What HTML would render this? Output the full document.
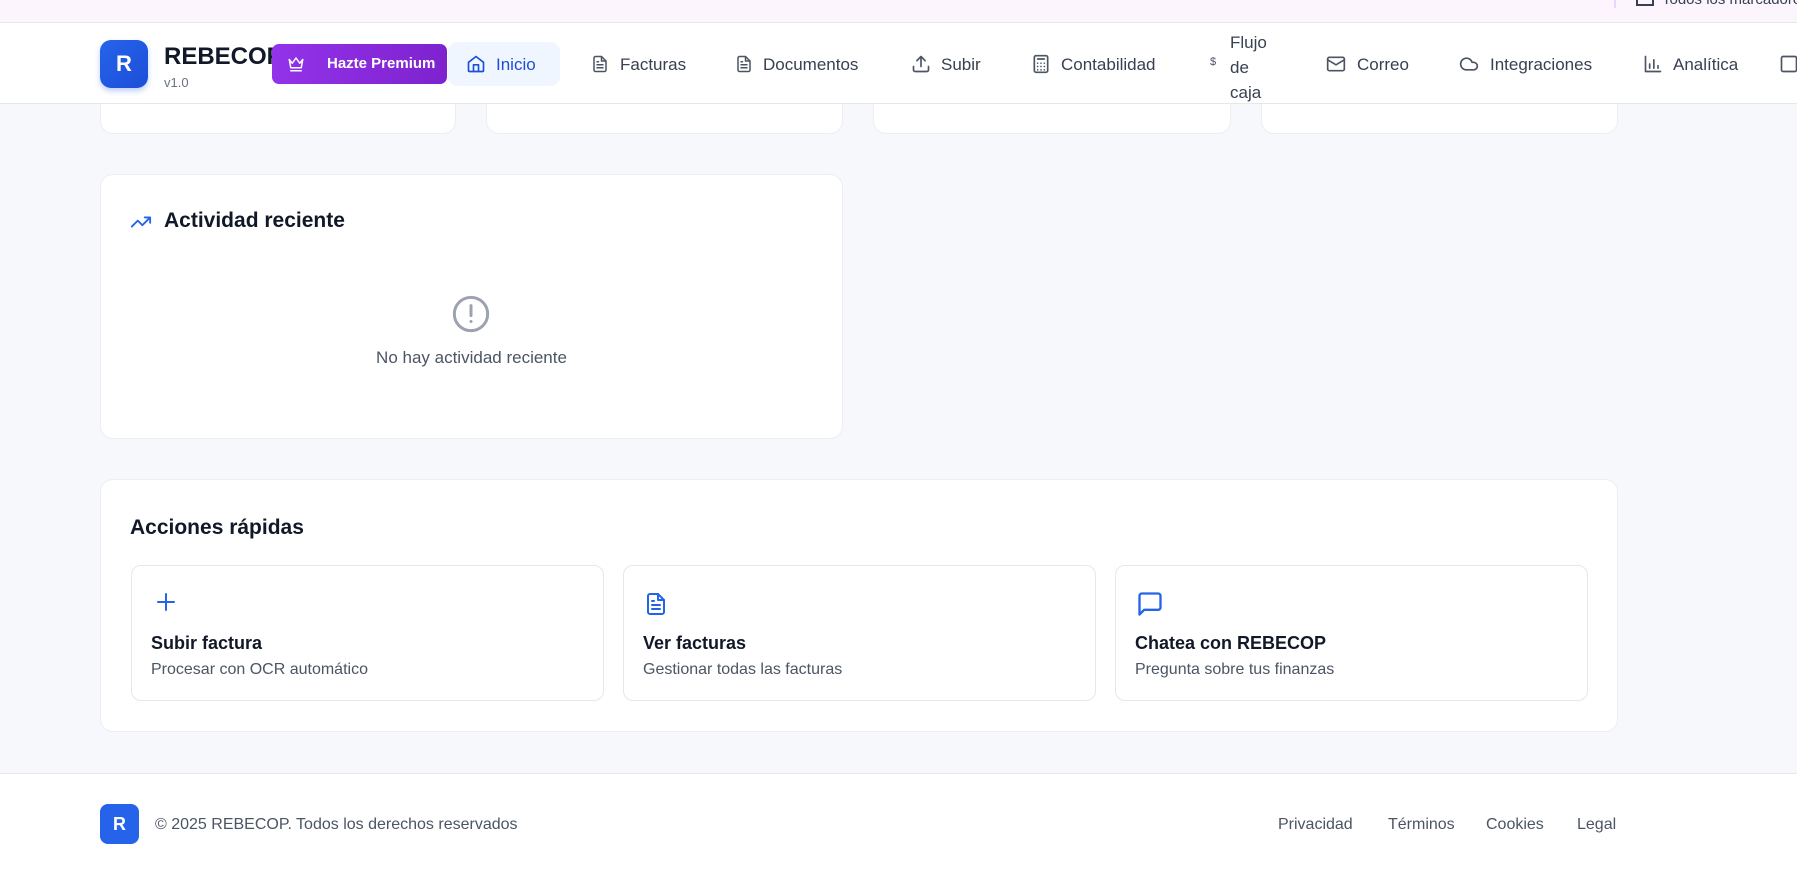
<!DOCTYPE html>
<html><head><meta charset="utf-8"><style>
*{box-sizing:border-box;margin:0;padding:0}
body{width:1797px;height:872px;background:#f6f8fb;font-family:"Liberation Sans",sans-serif;position:relative;overflow:hidden;color:#111827}
.a{position:absolute}
.top{left:0;top:0;width:1797px;height:23px;background:#fdf5fd;border-bottom:1px solid #e5e7eb}
.nav{left:0;top:23px;width:1797px;height:81px;background:#fff;border-bottom:1px solid #e5e7eb}
.card{background:#fff;border:1px solid #eceef2;border-radius:13px}
.ni{font-size:17px;color:#374151;top:55px;white-space:nowrap}
svg{position:absolute;fill:none;stroke-linecap:round;stroke-linejoin:round}
.sub{border:1px solid #e5e7eb;border-radius:10px;background:#fff;width:473px;height:136px;top:565px}
.sub h4{position:absolute;left:19px;top:67px;font-size:18px;font-weight:bold;color:#111827}
.sub p{position:absolute;left:19px;top:95px;font-size:16px;color:#4b5563}
.fl{top:816px;font-size:16px;color:#4b5563}
</style></head><body>
<div class="a top"></div>
<div class="a" style="left:1614px;top:0;width:2px;height:8px;background:#e9d5ff"></div>
<div class="a" style="left:1636px;top:0;width:18px;height:6px;border:2px solid #374151;border-top:none"></div>
<div class="a" style="left:1662px;top:-9px;font-size:15px;color:#374151;white-space:nowrap">Todos los marcadores</div>
<div class="a card" style="left:100px;top:90px;width:356px;height:44px"></div>
<div class="a card" style="left:486px;top:90px;width:357px;height:44px"></div>
<div class="a card" style="left:873px;top:90px;width:358px;height:44px"></div>
<div class="a card" style="left:1261px;top:90px;width:357px;height:44px"></div>
<div class="a nav"></div>
<div class="a" style="left:100px;top:40px;width:48px;height:48px;border-radius:11px;background:linear-gradient(135deg,#2563eb,#1d4ed8);color:#fff;font-weight:bold;font-size:22px;text-align:center;line-height:48px;box-shadow:0 3px 6px rgba(37,99,235,.3)">R</div>
<div class="a" style="left:164px;top:43px;font-size:24px;font-weight:bold;color:#111827">REBECOP</div>
<div class="a" style="left:164px;top:75px;font-size:13px;color:#6b7280">v1.0</div>
<div class="a" style="left:272px;top:44px;width:175px;height:40px;border-radius:7px;background:linear-gradient(90deg,#9333ea,#7e22ce);color:#fff;font-weight:bold;font-size:15px;line-height:40px;padding-left:55px">Hazte Premium</div>
<svg style="left:287px;top:55px" width="18" height="18" viewBox="0 0 24 24" stroke="#fff" stroke-width="2"><path d="M3 6l4 5 5-7 5 7 4-5-2 11H5z"/><path d="M5 21h14"/></svg>
<div class="a" style="left:448px;top:42px;width:112px;height:44px;border-radius:10px;background:#eff6ff"></div>
<svg style="left:466px;top:54px" width="20" height="20" viewBox="0 0 24 24" stroke="#1d4ed8" stroke-width="2"><path d="M3 10l9-7 9 7v10a1 1 0 0 1-1 1H4a1 1 0 0 1-1-1z"/><path d="M9 21v-8h6v8"/></svg>
<div class="a ni" style="left:496px;color:#1d4ed8">Inicio</div>
<svg style="left:591px;top:54px" width="18" height="20" viewBox="0 0 24 24" stroke="#4b5563" stroke-width="2"><path d="M14 2H6a2 2 0 0 0-2 2v16a2 2 0 0 0 2 2h12a2 2 0 0 0 2-2V8z"/><path d="M14 2v6h6M8 13h8M8 17h8M8 9h2"/></svg>
<div class="a ni" style="left:620px">Facturas</div>
<svg style="left:735px;top:54px" width="18" height="20" viewBox="0 0 24 24" stroke="#4b5563" stroke-width="2"><path d="M14 2H6a2 2 0 0 0-2 2v16a2 2 0 0 0 2 2h12a2 2 0 0 0 2-2V8z"/><path d="M14 2v6h6M8 13h8M8 17h8M8 9h2"/></svg>
<div class="a ni" style="left:763px">Documentos</div>
<svg style="left:911px;top:54px" width="20" height="20" viewBox="0 0 24 24" stroke="#4b5563" stroke-width="2"><path d="M21 15v4a2 2 0 0 1-2 2H5a2 2 0 0 1-2-2v-4M17 8l-5-5-5 5M12 3v12"/></svg>
<div class="a ni" style="left:941px">Subir</div>
<svg style="left:1031px;top:54px" width="20" height="20" viewBox="0 0 24 24" stroke="#4b5563" stroke-width="2"><rect x="4" y="2" width="16" height="20" rx="2"/><path d="M8 6h8M8 11h.01M12 11h.01M16 11h.01M8 15h.01M12 15h.01M16 15h.01M8 19h.01M12 19h.01M16 19h.01"/></svg>
<div class="a ni" style="left:1061px">Contabilidad</div>
<div class="a" style="left:1210px;top:56px;font-size:11px;color:#4b5563">$</div>
<div class="a" style="left:1230px;top:30px;font-size:17px;color:#374151;line-height:25px">Flujo<br>de<br>caja</div>
<svg style="left:1326px;top:54px" width="20" height="20" viewBox="0 0 24 24" stroke="#4b5563" stroke-width="2"><rect x="2" y="4" width="20" height="16" rx="2"/><path d="M22 7l-10 6L2 7"/></svg>
<div class="a ni" style="left:1357px">Correo</div>
<svg style="left:1459px;top:54px" width="20" height="20" viewBox="0 0 24 24" stroke="#4b5563" stroke-width="2"><path d="M17.5 19H9a7 7 0 1 1 6.7-9h1.8a4.5 4.5 0 1 1 0 9z"/></svg>
<div class="a ni" style="left:1490px">Integraciones</div>
<svg style="left:1643px;top:54px" width="20" height="20" viewBox="0 0 24 24" stroke="#4b5563" stroke-width="2"><path d="M3 3v18h18M8 17v-5M13 17V7M18 17v-3"/></svg>
<div class="a ni" style="left:1673px">Analítica</div>
<svg style="left:1779px;top:54px" width="20" height="20" viewBox="0 0 24 24" stroke="#4b5563" stroke-width="2"><rect x="3" y="3" width="18" height="18" rx="2"/></svg>

<div class="a card" style="left:100px;top:174px;width:743px;height:265px"></div>
<svg style="left:129px;top:211px" width="24" height="22" viewBox="0 0 24 24" stroke="#2563eb" stroke-width="2"><path d="M22 7l-8.5 8.5-5-5L2 17M16 7h6v6"/></svg>
<div class="a" style="left:164px;top:209px;font-size:21px;font-weight:bold">Actividad reciente</div>
<svg style="left:451px;top:294px" width="40" height="40" viewBox="0 0 24 24" stroke="#9ca3af" stroke-width="1.8"><circle cx="12" cy="12" r="10"/><path d="M12 7v6M12 16.5h.01"/></svg>
<div class="a" style="left:100px;top:348px;width:743px;text-align:center;font-size:17px;color:#4b5563">No hay actividad reciente</div>

<div class="a card" style="left:100px;top:479px;width:1518px;height:253px"></div>
<div class="a" style="left:130px;top:516px;font-size:21px;font-weight:bold">Acciones rápidas</div>
<div class="a sub" style="left:131px"><h4>Subir factura</h4><p>Procesar con OCR automático</p>
<svg style="left:22px;top:24px" width="24" height="24" viewBox="0 0 24 24" stroke="#2563eb" stroke-width="2"><path d="M12 4v16M4 12h16"/></svg></div>
<div class="a sub" style="left:623px"><h4>Ver facturas</h4><p>Gestionar todas las facturas</p>
<svg style="left:20px;top:24px" width="24" height="28" viewBox="0 0 24 24" stroke="#2563eb" stroke-width="2"><path d="M14 2H6a2 2 0 0 0-2 2v16a2 2 0 0 0 2 2h12a2 2 0 0 0 2-2V8z"/><path d="M14 2v6h6M8 13h8M8 17h8M8 9h2"/></svg></div>
<div class="a sub" style="left:1115px"><h4>Chatea con REBECOP</h4><p>Pregunta sobre tus finanzas</p>
<svg style="left:20px;top:24px" width="28" height="28" viewBox="0 0 24 24" stroke="#2563eb" stroke-width="2"><path d="M21 15a2 2 0 0 1-2 2H7l-4 4V5a2 2 0 0 1 2-2h14a2 2 0 0 1 2 2z"/></svg></div>

<div class="a" style="left:0;top:773px;width:1797px;height:99px;background:#fff;border-top:1px solid #e5e7eb"></div>
<div class="a" style="left:100px;top:804px;width:39px;height:40px;border-radius:8px;background:#2563eb;color:#fff;font-weight:bold;font-size:18px;text-align:center;line-height:40px">R</div>
<div class="a fl" style="left:155px">© 2025 REBECOP. Todos los derechos reservados</div>
<div class="a fl" style="left:1278px">Privacidad</div>
<div class="a fl" style="left:1388px">Términos</div>
<div class="a fl" style="left:1486px">Cookies</div>
<div class="a fl" style="left:1577px">Legal</div>
</body></html>
